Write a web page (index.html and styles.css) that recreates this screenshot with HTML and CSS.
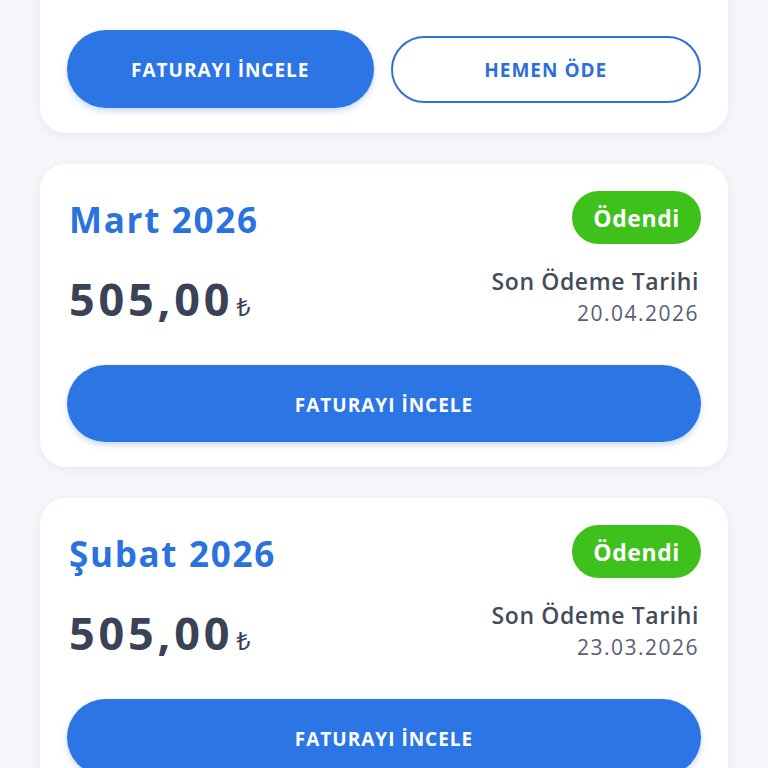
FILE: index.html
```html
<!DOCTYPE html>
<html lang="tr">
<head>
<meta charset="utf-8">
<link rel="stylesheet" href="styles.css">
</head>
<body>
<div class="list">
  <div class="card card-top">
    <div class="actions">
      <button class="btn btn-fill btn-half">FATURAYI İNCELE</button>
      <button class="btn btn-outline btn-half">HEMEN ÖDE</button>
    </div>
  </div>

  <div class="card">
    <div class="head">
      <div class="month">Mart 2026</div>
      <div class="badge">Ödendi</div>
    </div>
    <div class="info">
      <div class="amount">505,00<span class="cur">₺</span></div>
      <div class="due">
        <div class="due-label">Son Ödeme Tarihi</div>
        <div class="due-date">20.04.2026</div>
      </div>
    </div>
    <button class="btn btn-fill btn-full">FATURAYI İNCELE</button>
  </div>

  <div class="card">
    <div class="head">
      <div class="month">Şubat 2026</div>
      <div class="badge">Ödendi</div>
    </div>
    <div class="info">
      <div class="amount">505,00<span class="cur">₺</span></div>
      <div class="due">
        <div class="due-label">Son Ödeme Tarihi</div>
        <div class="due-date">23.03.2026</div>
      </div>
    </div>
    <button class="btn btn-fill btn-full">FATURAYI İNCELE</button>
  </div>
</div>
</body>
</html>
```
FILE: styles.css
```css
html, body {
  margin: 0;
  padding: 0;
  background: #f5f6fa;
  font-family: "Open Sans", "Noto Sans", sans-serif;
  overflow: hidden;
}
.list {
  display: flex;
  flex-direction: column;
  gap: 31px;
  padding: 0 40px;
  margin-top: -40px;
}
.card {
  background: #ffffff;
  border-radius: 26px;
  padding: 27px 27px 25px;
  box-shadow: 0 2px 8px rgba(40, 50, 80, 0.07);
}
.card-top {
  padding-top: 70px;
}
.actions {
  display: flex;
  align-items: center;
  gap: 17px;
}
.btn {
  font-family: "Open Sans", "Noto Sans", sans-serif;
  font-weight: 700;
  font-size: 19px;
  letter-spacing: 1px;
  border-radius: 40px;
  padding-top: 3px;
  cursor: pointer;
}
.btn-half {
  flex: 1;
}
.btn-fill {
  background: #2b75e5;
  color: #ffffff;
  border: none;
  height: 78px;
  box-shadow: 0 3px 6px rgba(43, 100, 200, 0.25);
}
.btn-outline {
  background: #ffffff;
  color: #2b70d8;
  border: 2px solid #2f72d6;
  height: 67px;
}
.btn-full {
  display: block;
  width: 100%;
  margin-top: 36px;
  height: 77px;
}
.head {
  display: flex;
  justify-content: space-between;
  align-items: center;
  height: 53px;
}
.month {
  color: #2a72dd;
  font-size: 35px;
  font-weight: 700;
  letter-spacing: 1.7px;
  padding-left: 2px;
  padding-top: 4px;
}
.badge {
  background: #3ec11b;
  color: #ffffff;
  font-size: 23px;
  font-weight: 700;
  letter-spacing: 0.6px;
  height: 53px;
  line-height: 55px;
  padding: 0 21px;
  border-radius: 27px;
}
.info {
  display: flex;
  justify-content: space-between;
  align-items: center;
  margin-top: 21px;
}
.amount {
  color: #3a4255;
  font-size: 45px;
  font-weight: 700;
  letter-spacing: 3.8px;
  padding-left: 2px;
  padding-top: 3px;
}
.cur {
  font-size: 25px;
  font-weight: 400;
  letter-spacing: 0;
  margin-left: 3px;
}
.due {
  text-align: right;
  color: #444b5b;
  margin-right: 2px;
}
.due-label {
  font-size: 23px;
  font-weight: 600;
  letter-spacing: 0.6px;
  line-height: 32px;
}
.due-date {
  font-size: 21px;
  font-weight: 400;
  letter-spacing: 1.5px;
  line-height: 32px;
  color: #596072;
}
```
